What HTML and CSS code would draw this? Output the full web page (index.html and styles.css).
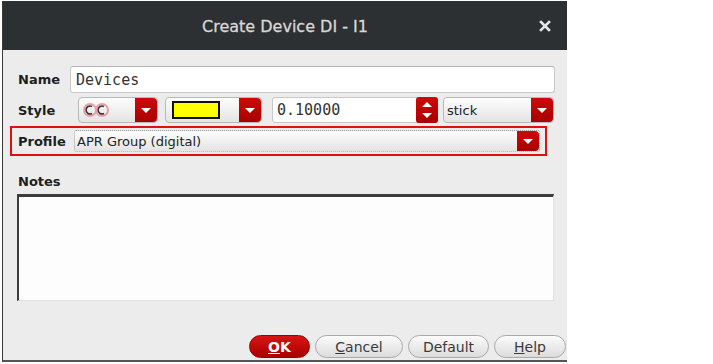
FILE: index.html
```html
<!DOCTYPE html>
<html lang="en">
<head>
    <meta charset="UTF-8">
    <title>Create Device DI - I1</title>
    <link rel="stylesheet" href="styles.css">
</head>
<body>

    <div class="dialog">
        <div class="titlebar">
            <span class="title">Create Device DI - I1</span>
            <svg class="close" width="12" height="12" viewBox="0 0 12 12">
                <path d="M2 2 L10 10 M10 2 L2 10" stroke="#e6e6e6" stroke-width="2.6" stroke-linecap="square"/>
            </svg>
        </div>

        <div class="content">
            <div class="row name-row">
                <label class="lbl">Name</label>
                <div class="text-input">Devices</div>
            </div>

            <div class="row style-row">
                <label class="lbl">Style</label>
                <div class="combo combo-line">
                    <svg class="line-icon" width="30" height="16" viewBox="0 0 30 16">
                        <circle cx="8" cy="8" r="6" fill="none" stroke="#e8a0a6" stroke-width="2"/>
                        <circle cx="20" cy="8" r="6" fill="none" stroke="#e8a0a6" stroke-width="2"/>
                        <path d="M10 4.5 A4 4 0 1 0 10 11.5" fill="none" stroke="#333" stroke-width="1.6"/>
                        <path d="M22 4.5 A4 4 0 1 0 22 11.5" fill="none" stroke="#333" stroke-width="1.6"/>
                    </svg>
                    <span class="drop"></span>
                </div>
                <div class="combo combo-color">
                    <span class="swatch"></span>
                    <span class="drop"></span>
                </div>
                <div class="spin">
                    <span class="spin-value">0.10000</span>
                    <span class="spin-btns">
                        <span class="arr-up"></span>
                        <span class="arr-down"></span>
                    </span>
                </div>
                <div class="combo combo-stick">
                    <span class="combo-text">stick</span>
                    <span class="drop"></span>
                </div>
            </div>

            <div class="row profile-row">
                <label class="lbl">Profile</label>
                <div class="combo combo-profile">
                    <span class="combo-text">APR Group (digital)</span>
                    <span class="drop"></span>
                </div>
            </div>

            <div class="notes-lbl">Notes</div>
            <div class="notes"></div>

            <div class="buttons">
                <button class="btn btn-ok"><u>O</u>K</button>
                <button class="btn btn-cancel"><u>C</u>ancel</button>
                <button class="btn btn-default">Default</button>
                <button class="btn btn-help"><u>H</u>elp</button>
            </div>
        </div>
    </div>

</body>
</html>
```

FILE: styles.css
```css
* { margin: 0; padding: 0; box-sizing: border-box; }
body {
    background-color: #fff;
    font-family: 'DejaVu Sans', sans-serif;
    color: #222;
}
.dialog {
    margin: 1px 0 0 2px;
    width: 565px;
    height: 361px;
    background-color: #ececec;
    border-left: 1px solid #3a3a3a;
    border-bottom: 2px solid #555;
    display: flex;
    flex-direction: column;
}
.titlebar {
    height: 49px;
    background-color: #2d3033;
    display: flex;
    align-items: center;
    justify-content: center;
    position: relative;
    padding-top: 2px;
}
.title {
    color: #d8d8d8;
    font-size: 16px;
    font-weight: 500;
    -webkit-text-stroke: 0.3px #d8d8d8;
}
.close { position: absolute; right: 16px; top: 19px; }

.content { padding: 16px 12px 0 15px; display: flex; flex-direction: column; flex: 1; }
.row { display: flex; align-items: center; }
.lbl { font-weight: bold; font-size: 13px; color: #1e1e1e; }

.name-row { height: 27px; }
.name-row .lbl { width: 52px; }
.text-input {
    flex: 1;
    height: 27px;
    background-color: #fff;
    border: 1px solid #c8c8c8;
    border-top-color: #b4b4b4;
    border-radius: 3px;
    font-family: 'DejaVu Sans Mono', monospace;
    font-size: 15px;
    line-height: 27px;
    padding-left: 5px;
    color: #333;
}

.style-row { height: 26px; margin-top: 4px; }
.style-row .lbl { width: 60px; }
.combo {
    height: 26px;
    border: 1px solid #b8b8b8;
    border-radius: 4px;
    background: linear-gradient(#fdfdfd, #e4e4e4);
    display: flex;
    align-items: center;
    position: relative;
}
.drop {
    margin-left: auto;
    width: 22px;
    height: 100%;
    border-radius: 0 4px 4px 0;
    background: linear-gradient(#cc0a0a, #a80000);
    display: flex;
    align-items: center;
    justify-content: center;
}
.drop::after {
    content: '';
    border-left: 5px solid transparent;
    border-right: 5px solid transparent;
    border-top: 5px solid #fff;
}
.combo-line { width: 80px; }
.line-icon { margin-left: 3px; }
.combo-color { width: 97px; margin-left: 7px; }
.swatch {
    width: 48px;
    height: 18px;
    margin-left: 6px;
    background-color: #ffff00;
    border: 2px solid #111;
}
.spin {
    width: 166px;
    height: 26px;
    margin-left: 10px;
    background-color: #fff;
    border: 1px solid #c8c8c8;
    border-radius: 3px;
    display: flex;
    align-items: center;
}
.spin-value {
    font-family: 'DejaVu Sans Mono', monospace;
    font-size: 15px;
    padding-left: 4px;
    color: #333;
}
.spin-btns {
    margin-left: auto;
    width: 22px;
    height: 26px;
    margin-right: -1px;
    border-radius: 3px;
    background: linear-gradient(#cc0a0a, #a80000);
    display: flex;
    flex-direction: column;
    align-items: center;
    justify-content: center;
    gap: 6px;
}
.arr-up {
    border-left: 5px solid transparent;
    border-right: 5px solid transparent;
    border-bottom: 5px solid #fff;
}
.arr-down {
    border-left: 5px solid transparent;
    border-right: 5px solid transparent;
    border-top: 5px solid #fff;
}
.combo-stick { width: 111px; margin-left: 5px; }
.combo-text { font-size: 13px; padding-left: 3px; color: #222; }

.profile-row {
    margin: 3px 8px 0 -8px;
    height: 30px;
    border: 2px solid #e01010;
    padding: 2px 5px 2px 6px;
}
.profile-row .lbl { width: 56px; }
.combo-profile {
    flex: 1;
    height: 22px;
    border: 1px dotted #a0a0a0;
    border-radius: 2px;
}
.combo-profile .combo-text { padding-left: 2px; }

.notes-lbl {
    font-weight: bold;
    font-size: 13px;
    color: #1e1e1e;
    margin-top: 18px;
    height: 20px;
}
.notes {
    margin-left: -1px;
    margin-right: 1px;
    height: 107px;
    background-color: #fdfdfd;
    border-top: 3px solid #3c3c3c;
    border-left: 2px solid #3c3c3c;
    border-right: 1px solid #e2e2e2;
    border-bottom: 1px solid #e2e2e2;
}

.buttons {
    display: flex;
    justify-content: flex-end;
    gap: 5px;
    margin-top: 34px;
    margin-right: -11px;
}
.btn {
    height: 23px;
    border: 1px solid #a9a9a9;
    border-radius: 12px;
    background: linear-gradient(#fbfbfb, #dcdcdc);
    font-family: 'DejaVu Sans', sans-serif;
    font-size: 14px;
    color: #3a3a3a;
}
.btn-ok {
    width: 61px;
    background: linear-gradient(#d81414, #a80000);
    border-color: #900;
    color: #fff;
    font-weight: bold;
}
.btn-cancel { width: 88px; }
.btn-default { width: 81px; }
.btn-help { width: 72px; }
```
